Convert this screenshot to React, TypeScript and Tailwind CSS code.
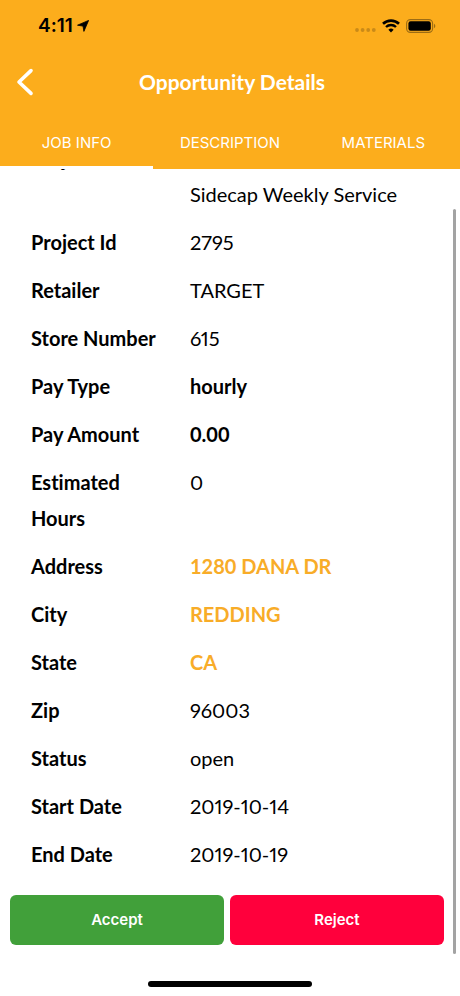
import { useState } from 'react'
import clsx from 'clsx'

type Detail = {
  label: string
  value: string
  bold?: boolean
  link?: boolean
}

const tabs = ['JOB INFO', 'DESCRIPTION', 'MATERIALS']

const details: Detail[] = [
  { label: 'Project', value: 'Cosmetics Weekly Sidecap Weekly Service' },
  { label: 'Project Id', value: '2795' },
  { label: 'Retailer', value: 'TARGET' },
  { label: 'Store Number', value: '615' },
  { label: 'Pay Type', value: 'hourly', bold: true },
  { label: 'Pay Amount', value: '0.00', bold: true },
  { label: 'Estimated Hours', value: '0' },
  { label: 'Address', value: '1280 DANA DR', link: true },
  { label: 'City', value: 'REDDING', link: true },
  { label: 'State', value: 'CA', link: true },
  { label: 'Zip', value: '96003' },
  { label: 'Status', value: 'open' },
  { label: 'Start Date', value: '2019-10-14' },
  { label: 'End Date', value: '2019-10-19' },
]

function StatusBar() {
  return (
    <div className="flex h-13 items-center justify-between pr-6 pl-[38px] text-black">
      <div className="flex items-center gap-1">
        <span className="font-['Inter',sans-serif] text-[19px] font-semibold">4:11</span>
        <svg viewBox="0 0 12 12" className="size-3" fill="currentColor" aria-hidden="true">
          <path d="M11.6.4 6.9 11.4 6 6.1.5 5.2z" stroke="currentColor" strokeWidth=".8" strokeLinejoin="round" />
        </svg>
      </div>
      <div className="flex items-center gap-1.5">
        <svg viewBox="0 0 21 4" className="mt-2 h-1 w-[21px]" fill="#c98a18" aria-hidden="true">
          <circle cx="2" cy="2" r="1.9" />
          <circle cx="7.6" cy="2" r="1.9" />
          <circle cx="13.2" cy="2" r="1.9" />
          <circle cx="18.8" cy="2" r="1.9" />
        </svg>
        <svg viewBox="0 0 18 14" className="h-3.5 w-4.5" fill="none" stroke="currentColor" aria-hidden="true">
          <path d="M1 4.8a11.6 11.6 0 0 1 16 0" strokeWidth="2.6" />
          <path d="M4 8a7.3 7.3 0 0 1 10 0" strokeWidth="2.4" />
          <path d="M9 13.4 6.4 10.8a3.8 3.8 0 0 1 5.2 0z" fill="currentColor" stroke="none" />
        </svg>
        <svg viewBox="0 0 30 14" className="h-3.5 w-7.5" aria-hidden="true">
          <rect x=".6" y=".6" width="26" height="12.8" rx="3.8" fill="none" stroke="#9c6c14" strokeWidth="1.1" />
          <rect x="2.4" y="2.3" width="22.4" height="9.4" rx="2.2" fill="#000" />
          <path d="M28 4.8c1.8.7 1.8 3.7 0 4.4z" fill="#9c6c14" />
        </svg>
      </div>
    </div>
  )
}

export default function App() {
  const [activeTab, setActiveTab] = useState('JOB INFO')

  return (
    <div className="relative flex h-screen flex-col overflow-hidden bg-white font-['Lato',sans-serif] text-black [font-variant-ligatures:none]">
      <header className="shrink-0 bg-[#fcad1c] text-white">
        <StatusBar />
        <div className="grid h-15 grid-cols-[48px_1fr_44px] items-center">
          <button type="button" aria-label="Back" className="flex h-full items-center pl-4">
            <svg viewBox="0 0 18 28" className="h-7 w-4.5" fill="none" stroke="currentColor" strokeWidth="3.6" strokeLinecap="round" strokeLinejoin="round">
              <path d="M15 2.6 3 14l12 11.4" />
            </svg>
          </button>
          <h1 className="text-center text-[21px] font-bold">Opportunity Details</h1>
        </div>
        <div role="tablist" className="grid h-[57px] grid-cols-3">
          {tabs.map((tab) => (
            <button
              key={tab}
              type="button"
              role="tab"
              aria-selected={tab === activeTab}
              onClick={() => setActiveTab(tab)}
              className={clsx(
                "border-b-3 pt-2 font-['Inter',sans-serif] text-[15px]",
                tab === activeTab ? 'border-white' : 'border-transparent'
              )}
            >
              {tab}
            </button>
          ))}
        </div>
      </header>

      {/* scrolled to the end, so the first row runs out under the header */}
      <main className="flex min-h-0 flex-1 flex-col justify-end overflow-hidden">
        <dl className="flex flex-col gap-3 pr-14 pl-[31px] text-xl/9">
          {details.map((item) => (
            <div key={item.label} className="grid grid-cols-[135px_1fr] gap-6">
              <dt className="font-bold">{item.label}</dt>
              <dd className={item.bold || item.link ? 'font-bold' : 'proportional-nums'}>
                {item.link ? (
                  <a href="#map" className="text-[#f8ac28]">{item.value}</a>
                ) : (
                  item.value
                )}
              </dd>
            </div>
          ))}
        </dl>
        <div className="mt-[23px] grid grid-cols-2 gap-1.5 pr-4 pl-2.5 font-['Inter',sans-serif] text-[15px] font-semibold text-white">
          <button type="button" className="h-[50px] rounded-md bg-[#41a03a]">Accept</button>
          <button type="button" className="h-[50px] rounded-md bg-[#ff003c]">Reject</button>
        </div>
      </main>

      <footer className="flex h-[51px] shrink-0 items-end justify-center pb-[9px]">
        <div className="h-1.5 w-41 rounded-full bg-black" />
      </footer>

      <div className="absolute top-[209px] right-1 bottom-[42px] w-[3px] rounded-full bg-[#a3a3a3]" />
    </div>
  )
}
